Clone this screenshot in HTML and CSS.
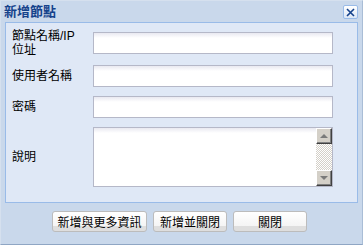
FILE: index.html
```html
<!DOCTYPE html>
<html lang="zh-Hant">
<head>
  <meta charset="UTF-8">
  <title>新增節點</title>
  <link rel="stylesheet" href="styles.css">
</head>
<body>
<div class="win">
  <div class="win-head">
    <span class="win-title">新增節點</span>
    <button class="win-close" type="button">
      <svg width="9" height="9" viewBox="0 0 9 9"><path d="M1 1L8 8M8 1L1 8" stroke="#15428b" stroke-width="1.6" fill="none"/></svg>
    </button>
  </div>

  <form class="panel">
    <div class="row row-tall">
      <label class="lbl">節點名稱/IP<br>位址</label>
      <input class="field" type="text">
    </div>
    <div class="row">
      <label class="lbl">使用者名稱</label>
      <input class="field" type="text">
    </div>
    <div class="row">
      <label class="lbl">密碼</label>
      <input class="field" type="password">
    </div>
    <div class="row">
      <label class="lbl">說明</label>
      <div class="memo">
        <textarea></textarea>
        <div class="vscroll">
          <span class="sb-btn"><i class="arrow-up"></i></span>
          <span class="sb-track"></span>
          <span class="sb-btn"><i class="arrow-down"></i></span>
        </div>
      </div>
    </div>
  </form>

  <div class="win-foot">
    <button class="btn btn-wide" type="button">新增與更多資訊</button>
    <button class="btn" type="button">新增並關閉</button>
    <button class="btn" type="button">關閉</button>
  </div>
</div>
</body>
</html>
```

FILE: styles.css
```css
* { box-sizing: border-box; }
body { margin: 0; font: 12px "Noto Sans CJK TC", "Noto Sans", sans-serif; color: #000; }

.win { width: 363px; height: 245px; display: flex; flex-direction: column; background: #c9d8eb; border: 1px solid #d5e0ee; border-right-color: #a9bdd6; border-bottom-color: #8fa6c4; }

.win-head { height: 21px; display: flex; align-items: center; justify-content: space-between; padding: 0 4px 2px 3px; }
.win-title { font-weight: bold; color: #15428b; font-size: 13px; line-height: 15px; }
.win-close { align-self: flex-start; margin-top: 4px; width: 15px; height: 14px; padding: 0; display: flex; align-items: center; justify-content: center; border: 1px solid #99bbe8; border-radius: 2px; background: linear-gradient(#ffffff, #dce7f6); cursor: pointer; }

.panel { margin: 0 4px; display: flex; flex-direction: column; gap: 9px; padding: 6px 24px 15px 6px; background: #dfe8f6; border: 1px solid #99bbe8; }
.row { display: flex; align-items: center; }
.row-tall { height: 28px; margin-bottom: -1px; }
.lbl { width: 81px; flex: none; font-family: "Liberation Sans", "Noto Sans CJK TC", sans-serif; line-height: 14px; }
.field { width: 240px; height: 22px; margin: 0; border: 1px solid #b5b8c8; background: linear-gradient(#e9e9f1, #ffffff 5px); font: inherit; padding: 2px 3px; }

.memo { width: 240px; height: 60px; display: flex; border: 1px solid #b5b8c8; background: linear-gradient(#e9e9f1, #ffffff 5px); }
.memo textarea { flex: 1; border: none; background: transparent; resize: none; overflow: hidden; font: inherit; padding: 2px 3px; outline: none; }
.vscroll { width: 16px; flex: none; display: flex; flex-direction: column; }
.sb-btn { height: 16px; flex: none; display: flex; align-items: center; justify-content: center; background: #d4d0c8; border: 1px solid; border-color: #ffffff #404040 #404040 #ffffff; box-shadow: inset -1px -1px #808080; }
.sb-track { flex: 1; background: repeating-conic-gradient(#d4d0c8 0 25%, #ffffff 0 50%) 0 0 / 2px 2px; }
.arrow-up, .arrow-down { width: 0; height: 0; border-left: 4px solid transparent; border-right: 4px solid transparent; }
.arrow-up { border-bottom: 4px solid #7a7a7a; }
.arrow-down { border-top: 4px solid #7a7a7a; }

.win-foot { display: flex; justify-content: center; gap: 6px; margin-top: 8px; padding-right: 4px; }
.btn { width: 74px; height: 21px; padding: 0; border: 1px solid #bcbcbc; border-radius: 3px; background: linear-gradient(#ffffff, #f4f4f4 75%, #dedede 75%, #dedede); font: inherit; color: #000; cursor: pointer; }
.btn-wide { width: 95px; }
```
